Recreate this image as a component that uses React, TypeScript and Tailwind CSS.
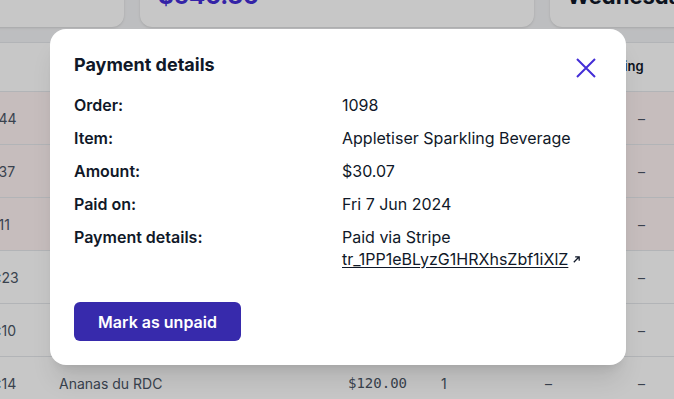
const rows = [
  { time: '10:44', name: 'Appletiser Sparkling Beverage', price: '$30.07', qty: '1', late: true },
  { time: '10:37', name: 'Kombucha Original', price: '$18.50', qty: '2', late: true },
  { time: '10:11', name: 'Mango Nectar', price: '$42.00', qty: '3', late: true },
  { time: '09:23', name: 'Ginger Beer', price: '$12.90', qty: '1', late: false },
  { time: '09:10', name: 'Citron Pressé', price: '$64.20', qty: '4', late: false },
  { time: '08:14', name: 'Ananas du RDC', price: '$120.00', qty: '1', late: false },
]

const details = [
  { label: 'Order:', value: '1098' },
  { label: 'Item:', value: 'Appletiser Sparkling Beverage' },
  { label: 'Amount:', value: '$30.07' },
  { label: 'Paid on:', value: 'Fri 7 Jun 2024' },
]

export default function App() {
  return (
    <div className="relative h-[399px] w-full overflow-hidden bg-gray-100 font-['Inter','Liberation_Sans',sans-serif] text-gray-900">
      {/* Summary cards behind the dialog */}
      <div className="-ml-[40px] -mt-[40px] flex gap-[16px]">
        <div className="h-[67px] w-[164px] shrink-0 rounded-xl bg-white shadow-sm" />
        <div className="h-[67px] w-[394px] shrink-0 rounded-xl bg-white pl-[18px] pt-[21px] shadow-sm">
          <div className="text-[24px] font-bold leading-[30px] text-indigo-700">$546.36</div>
        </div>
        <div className="h-[67px] w-[300px] shrink-0 rounded-xl bg-white pl-[17px] pt-[21px] shadow-sm">
          <div className="text-[22px] font-bold leading-[30px] text-gray-900">Wednesday</div>
        </div>
      </div>

      {/* Orders table */}
      <div className="mt-[15px] border-t border-gray-200 bg-white">
        <div className="flex h-[49px] items-center border-b border-gray-200 text-[13px] font-semibold">
          <div className="w-[588px] shrink-0" />
          <div>Shipping</div>
        </div>
        {rows.map(row => (
          <div key={row.time} className={`flex h-[53px] items-center border-b border-gray-200 text-[14px] text-gray-600 ${row.late ? 'bg-red-50' : 'bg-white'}`}>
            <div className="-ml-[20px] w-[79px] shrink-0">{row.time}</div>
            <div className="w-[289px] shrink-0">{row.name}</div>
            <div className="w-[93px] shrink-0 font-['DejaVu_Sans_Mono',monospace] text-[14px] font-medium">{row.price}</div>
            <div className="w-[104px] shrink-0">{row.qty}</div>
            <div className="w-[93px] shrink-0">–</div>
            <div>–</div>
          </div>
        ))}
      </div>

      {/* Dialog */}
      <div className="absolute inset-0 bg-black/[0.22] pl-[50px] pt-[29px]">
        <div className="w-[576px] rounded-2xl bg-white px-6 pb-6 pt-6 shadow-xl">
          <div className="flex items-start justify-between">
            <h2 className="text-[18px] font-bold leading-6 text-gray-900">Payment details</h2>
            <button className="mr-[6px] mt-[5px] text-indigo-700" aria-label="Close">
              <svg width="20" height="20" viewBox="0 0 20 20" fill="none" stroke="currentColor" strokeWidth="2">
                <path d="M1 1L19 19M19 1L1 19" />
              </svg>
            </button>
          </div>
          <div className="mt-[16px] grid grid-cols-[268px_1fr] gap-y-[11px] text-[16px] leading-[22px]">
            {details.map(item => (
              <div key={item.label} className="contents">
                <div className="font-semibold">{item.label}</div>
                <div>{item.value}</div>
              </div>
            ))}
            <div className="font-semibold">Payment details:</div>
            <div>
              <div>Paid via Stripe</div>
              <a href="#" className="inline-flex items-center gap-[4px]">
                <span className="underline underline-offset-2">tr_1PP1eBLyzG1HRXhsZbf1iXlZ</span>
                <svg width="9" height="9" viewBox="0 0 10 10" fill="none" stroke="currentColor" strokeWidth="1.4">
                  <path d="M2 8L8 2M3.5 2H8V6.5" />
                </svg>
              </a>
            </div>
          </div>
          <button className="mt-[32px] h-[39px] w-[167px] rounded-md bg-indigo-800 text-[16px] font-semibold text-white">
            Mark as unpaid
          </button>
        </div>
      </div>
    </div>
  )
}
